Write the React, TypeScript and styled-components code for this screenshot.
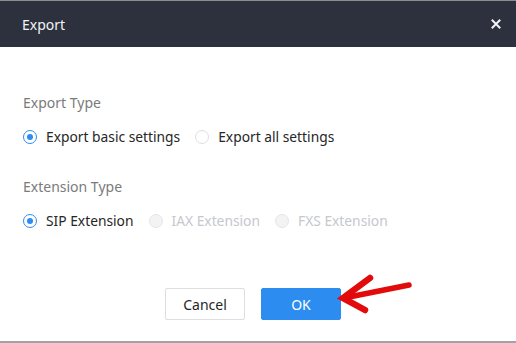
import React from 'react'
import styled, { createGlobalStyle } from 'styled-components'

const GlobalStyle = createGlobalStyle`
  html, body {
    margin: 0;
    padding: 0;
    background: #ffffff;
  }
  body {
    font-family: 'Noto Sans', 'Open Sans', sans-serif;
  }
`

const Modal = styled.div`
  width: 516px;
  height: 343px;
  box-sizing: border-box;
  border-top: 1px solid #8c8c8c;
  border-bottom: 2px solid #a3a3a3;
  display: flex;
  flex-direction: column;
  background: #fff;
`

const Header = styled.div`
  height: 46px;
  background: #2d313d;
  display: flex;
  align-items: center;
  justify-content: space-between;
  padding: 0 15px 0 22px;
  box-sizing: border-box;
`

const Title = styled.span`
  color: #f2f4f7;
  font-size: 14px;
`

const Close = styled.button`
  border: 0;
  background: none;
  padding: 0;
  width: 10px;
  height: 10px;
  display: flex;
  cursor: pointer;
`

const Body = styled.div`
  flex: 1;
  padding: 46px 23px 0;
  display: flex;
  flex-direction: column;
`

const Section = styled.div`
  margin-bottom: 30px;
`

const Label = styled.div`
  color: #7b7b7b;
  font-size: 14px;
  line-height: 20px;
  margin-bottom: 14px;
`

const Group = styled.div`
  display: flex;
  align-items: center;
  gap: 15px;
`

const Option = styled.label<{ $disabled?: boolean }>`
  display: flex;
  align-items: center;
  gap: 9px;
  font-size: 13.8px;
  line-height: 20px;
  color: ${(p) => (p.$disabled ? '#c5c8ce' : '#262626')};
`

const Circle = styled.span<{ $checked?: boolean; $disabled?: boolean }>`
  width: 14px;
  height: 14px;
  box-sizing: border-box;
  border-radius: 50%;
  border: 1px solid ${(p) => (p.$checked ? '#2d8cf0' : p.$disabled ? '#e3e5e8' : '#dcdee2')};
  background: ${(p) => (p.$disabled ? '#f3f3f3' : '#fff')};
  display: flex;
  align-items: center;
  justify-content: center;

  &::after {
    content: '';
    display: ${(p) => (p.$checked ? 'block' : 'none')};
    width: 6px;
    height: 6px;
    border-radius: 50%;
    background: #2d8cf0;
  }
`

const Footer = styled.div`
  display: flex;
  align-items: center;
  padding-left: 142px;
  gap: 16px;
  margin-top: 27px;
  position: relative;
`

const Button = styled.button<{ $primary?: boolean }>`
  width: 80px;
  height: 32px;
  box-sizing: border-box;
  border-radius: 2px;
  font-family: inherit;
  font-size: 14px;
  border: 1px solid ${(p) => (p.$primary ? '#2d8cf0' : '#dcdee2')};
  background: ${(p) => (p.$primary ? '#2d8cf0' : '#fff')};
  color: ${(p) => (p.$primary ? '#fff' : '#262626')};
`

const Arrow = styled.svg`
  position: absolute;
  left: 313px;
  top: -16px;
`

type Opt = { text: string; checked?: boolean; disabled?: boolean }

function RadioGroup({ options }: { options: Opt[] }) {
  return (
    <Group>
      {options.map((o) => (
        <Option key={o.text} $disabled={o.disabled}>
          <Circle $checked={o.checked} $disabled={o.disabled} />
          {o.text}
        </Option>
      ))}
    </Group>
  )
}

export default function App() {
  return (
    <>
      <GlobalStyle />
      <Modal>
        <Header>
          <Title>Export</Title>
          <Close aria-label="Close">
            <svg width="10" height="10" viewBox="0 0 10 10">
              <path d="M1.5 1.5L8.5 8.5M8.5 1.5L1.5 8.5" stroke="#f2f4f7" strokeWidth="2" strokeLinecap="square" />
            </svg>
          </Close>
        </Header>
        <Body>
          <Section>
            <Label>Export Type</Label>
            <RadioGroup
              options={[
                { text: 'Export basic settings', checked: true },
                { text: 'Export all settings' },
              ]}
            />
          </Section>
          <Section>
            <Label>Extension Type</Label>
            <RadioGroup
              options={[
                { text: 'SIP Extension', checked: true },
                { text: 'IAX Extension', disabled: true },
                { text: 'FXS Extension', disabled: true },
              ]}
            />
          </Section>
          <Footer>
            <Button>Cancel</Button>
            <Button $primary>OK</Button>
            <Arrow width="82" height="44" viewBox="0 0 82 44">
              <path d="M8 26L73 13" stroke="#e20a0a" strokeWidth="5.5" strokeLinecap="round" fill="none" />
              <path
                d="M34 6L7 26L29 38"
                stroke="#e20a0a"
                strokeWidth="6.5"
                strokeLinecap="round"
                strokeLinejoin="miter"
                fill="none"
              />
            </Arrow>
          </Footer>
        </Body>
      </Modal>
    </>
  )
}
